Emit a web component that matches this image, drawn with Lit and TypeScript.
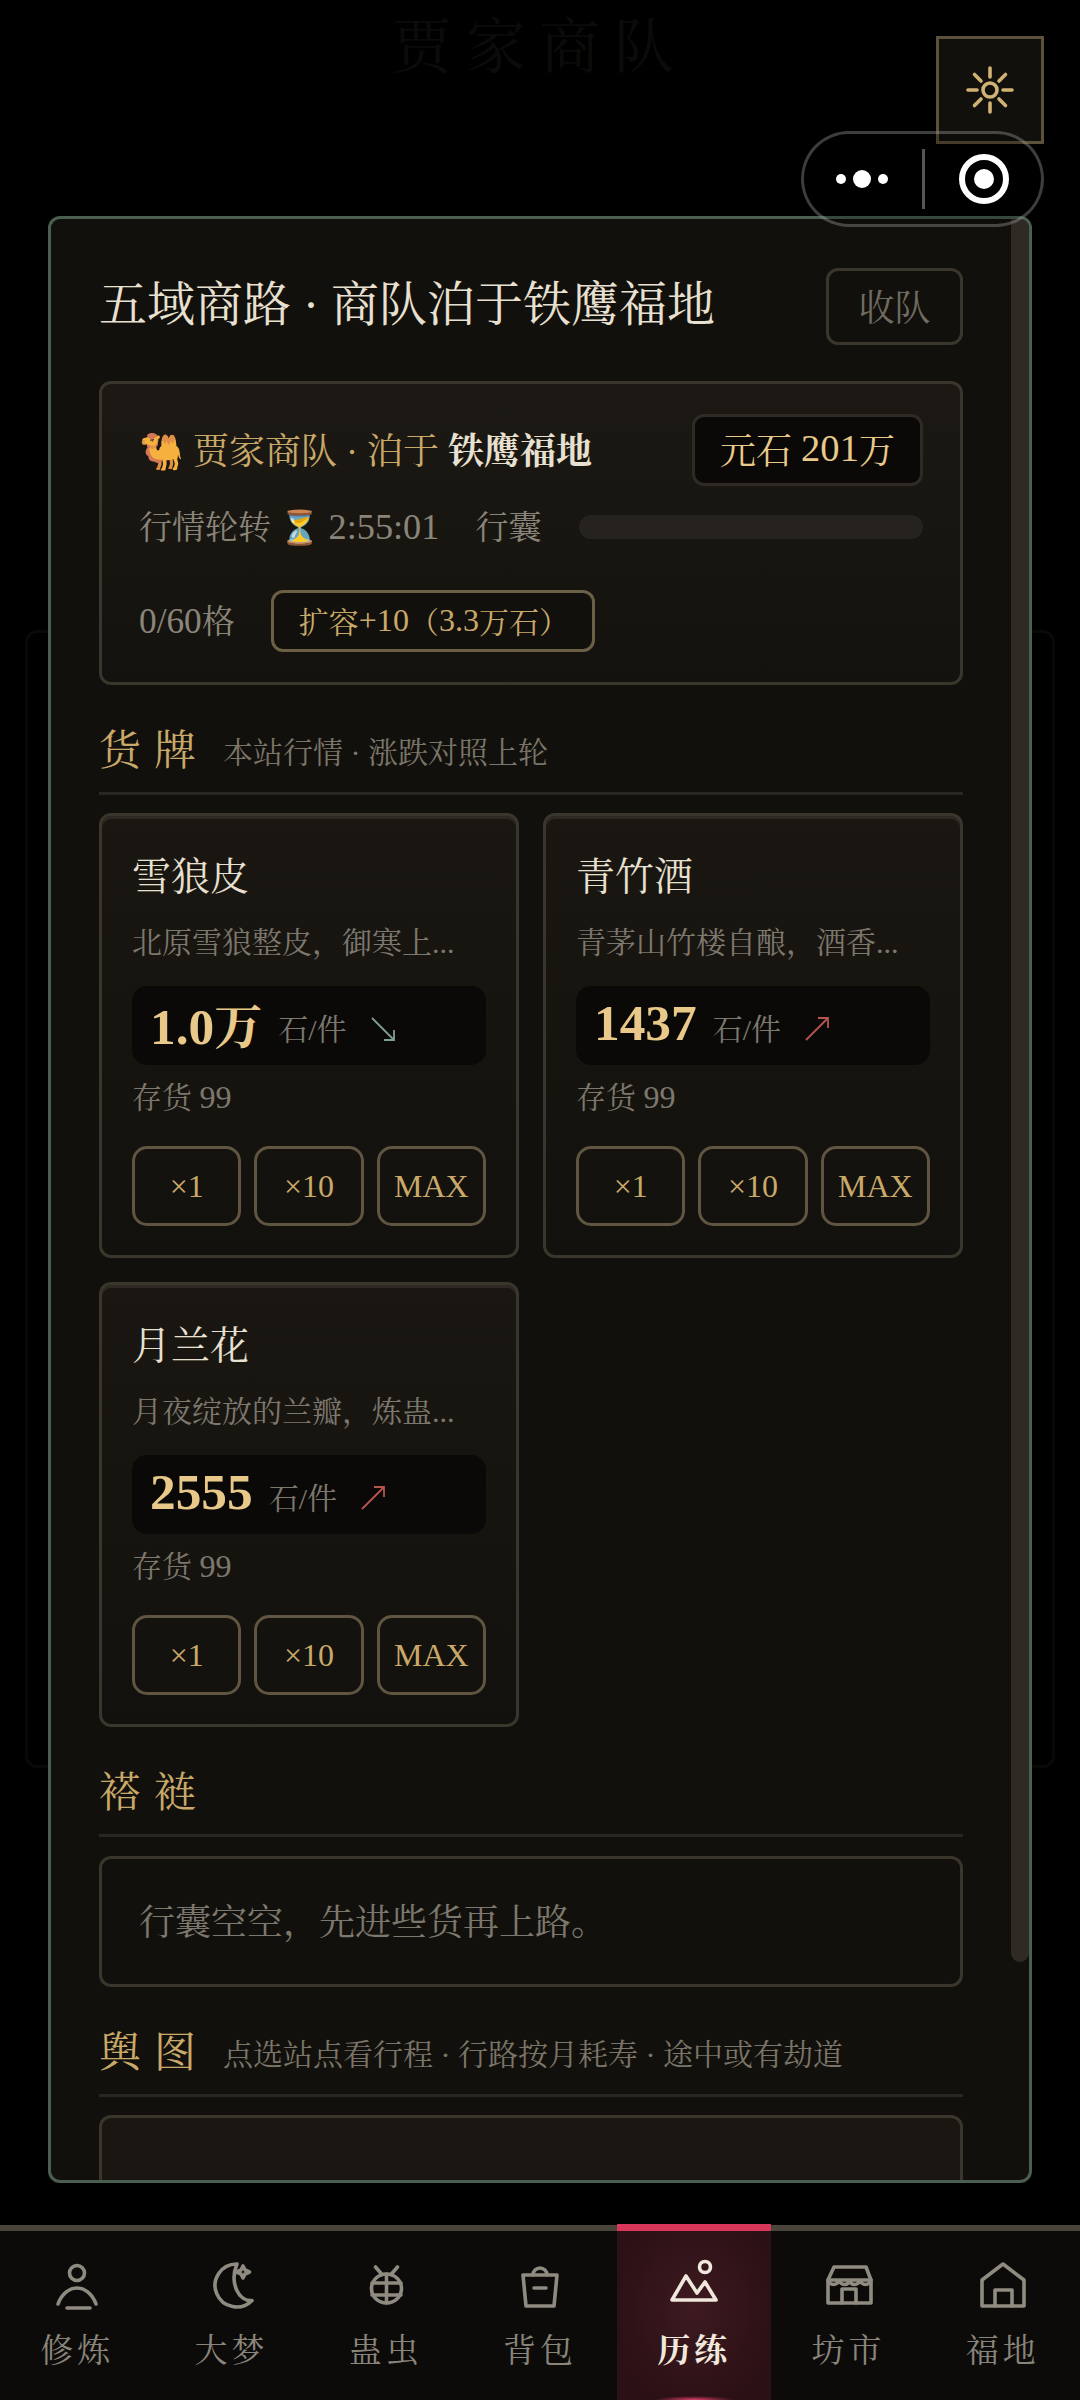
import { LitElement, html, css, svg } from "lit";
import { customElement } from "lit/decorators.js";

type Good = { name: string; desc: string; price: string; unit?: string; dir: "up" | "down" };
const goods: Good[] = [
  { name: "雪狼皮", desc: "北原雪狼整皮，御寒上...", price: "1.0", unit: "万", dir: "down" },
  { name: "青竹酒", desc: "青茅山竹楼自酿，酒香...", price: "1437", dir: "up" },
  { name: "月兰花", desc: "月夜绽放的兰瓣，炼蛊...", price: "2555", dir: "up" },
];

const icons: Record<string, unknown> = {
  person: svg`<circle cx="30" cy="16" r="7.5"/><path d="M11 47C15 36 23 31 30 31S45 36 49 47"/><path d="M20 51H43"/>`,
  moon: svg`<path d="M36 7A21.5 21.5 0 1 0 51 43.5C38 45 28 26 36 7Z"/><path d="M42 9L44 13L48.5 15L44 17L42 21L40 17L35.5 15L40 13Z"/>`,
  bug: svg`<ellipse cx="30.5" cy="31.5" rx="15" ry="14.5"/><path d="M19.5 10L26 17.5M41.5 10L35 17.5M30.5 17V46M16 26H45M16 38H45"/>`,
  bag: svg`<path d="M13 18H47L44 49H16Z"/><path d="M23 18A7 7 0 0 1 37 18"/><path d="M24 31H36"/>`,
  mountain: svg`<path d="M8 43L22 19L33 36L41 25L52 43Z"/><circle cx="41" cy="10" r="5.5"/>`,
  shop: svg`<path d="M15 10H47L52 23V46H9V23Z"/><path d="M9 23H52M9 23C11 29 18 29 20 23C22 29 29 29 30.5 23C32 29 39 29 41 23C43 29 50 29 52 23"/><path d="M23 46V32H37V46"/>`,
  house: svg`<path d="M9 49V23L30 7L51 23V49Z"/><path d="M22 49V33H39V49"/>`,
};

const tabs = [
  { label: "修炼", icon: "person" },
  { label: "大梦", icon: "moon" },
  { label: "蛊虫", icon: "bug" },
  { label: "背包", icon: "bag" },
  { label: "历练", icon: "mountain", active: true },
  { label: "坊市", icon: "shop" },
  { label: "福地", icon: "house" },
];

@customElement("app-root")
export class AppRoot extends LitElement {
  static styles = css`
    :host {
      display: flex;
      flex-direction: column;
      width: 1080px;
      height: 2400px;
      background: #000;
      font-family: "Liberation Serif", "Noto Serif CJK SC", serif;
      color: #e8e0d0;
      overflow: hidden;
    }
    * { box-sizing: border-box; }
    .n { font-size: 1.07em; line-height: 1; }
    .n.clock { font-size: 1.1em; }
    .stage { position: relative; flex: 1; }
    .ghost-title {
      text-align: center;
      padding-top: 12px;
      font-size: 60px;
      letter-spacing: 14px;
      color: #0b0b0a;
      line-height: 72px;
    }
    .ghost-panel {
      position: absolute;
      left: 25px;
      top: 630px;
      width: 1030px;
      height: 1138px;
      border: 3px solid #090908;
      border-radius: 12px;
    }
    .settings {
      position: absolute;
      left: 936px;
      top: 36px;
      width: 108px;
      height: 108px;
      background: #12100c;
      border: 3px solid #5c5139;
      display: flex;
      align-items: center;
      justify-content: center;
    }
    .settings svg { width: 60px; height: 60px; fill: none; stroke: #d0b274; stroke-width: 3.6; stroke-linecap: round; }
    .capsule {
      position: absolute;
      z-index: 3;
      left: 801px;
      top: 131px;
      width: 243px;
      height: 96px;
      border: 3px solid rgba(255, 255, 255, 0.24);
      border-radius: 48px;
      background: rgba(0, 0, 0, 0.25);
    }
    .capsule svg { display: block; width: 237px; height: 90px; }
    .modal {
      position: absolute;
      z-index: 2;
      left: 48px;
      top: 216px;
      width: 984px;
      height: 1967px;
      background: #12100c;
      border: 3px solid #4a5f50;
      border-radius: 12px;
      overflow: hidden;
      padding: 49px 66px 0 48px;
    }
    .thumb {
      position: absolute;
      right: 0;
      top: 0;
      width: 18px;
      height: 1743px;
      background: #2f2b24;
      border-radius: 0 0 9px 9px;
    }
    .title-row { display: flex; justify-content: space-between; align-items: center; height: 77px; }
    .title { font-size: 48px; line-height: 73px; color: #e8e0d0; padding-bottom: 4px; }
    .close {
      width: 137px;
      height: 77px;
      border: 3px solid #3a362c;
      border-radius: 12px;
      padding-bottom: 3px;
      display: flex;
      align-items: center;
      justify-content: center;
      font-size: 36px;
      color: #6f6b60;
    }
    .info {
      margin-top: 36px;
      height: 304px;
      padding: 30px 37px 0;
      border: 3px solid #3a362c;
      border-radius: 12px;
      background: linear-gradient(#1c1914, #14120e);
    }
    .info-top { display: flex; justify-content: space-between; align-items: center; }
    .caravan { font-size: 36px; color: #c9a96a; padding-bottom: 4px; }
    .caravan b { color: #e8e0d0; }
    .stone {
      width: 231px;
      height: 72px;
      border: 3px solid #2f2b24;
      border-radius: 12px;
      background: #0a0908;
      padding-bottom: 3px;
      display: flex;
      align-items: center;
      justify-content: center;
      font-size: 36px;
      white-space: pre;
      color: #e8c98a;
    }
    .info-mid {
      margin-top: 14px;
      height: 54px;
      padding-bottom: 6px;
      display: flex;
      align-items: center;
      font-size: 33px;
      color: #8a857a;
    }
    .timer { margin-right: 36px; }
    .bar { flex: 1; height: 24px; margin-top: 6px; margin-left: 38px; background: #26231e; border-radius: 12px; }
    .info-low { margin-top: 36px; display: flex; align-items: center; gap: 36px; font-size: 33px; color: #8a857a; }
    .slots { padding-bottom: 5px; }
    .expand {
      width: 324px;
      height: 62px;
      border: 3px solid #6b5f45;
      border-radius: 12px;
      background: #12100c;
      padding: 0 0 2px 25px;
      display: flex;
      align-items: center;
      white-space: pre;
      font-size: 30px;
      color: #c9a96a;
    }
    .head {
      margin-top: 24px;
      display: flex;
      align-items: center;
      height: 86px;
      padding-bottom: 11px;
      border-bottom: 3px solid #2a2722;
    }
    .head h3 {
      margin: 0;
      font-weight: 400;
      font-size: 42px;
      letter-spacing: 13px;
      color: #c9a96a;
      margin-right: 14px;
      padding-top: 4px;
    }
    .head span { font-size: 30px; color: #7a7568; padding-top: 10px; }
    .grid { margin-top: 18px; display: grid; grid-template-columns: 420px 420px; gap: 24px; }
    .card {
      height: 445px;
      padding: 30px 30px 0;
      border: 3px solid #3a362c;
      border-radius: 12px;
      background: linear-gradient(#1a1712, #13110d);
      box-shadow: inset 0 3px 0 #2e2a23;
    }
    .name { font-size: 39px; line-height: 62px; color: #e8e0d0; }
    .desc { margin-top: 11px; font-size: 30px; line-height: 48px; color: #7d786e; white-space: nowrap; overflow: hidden; }
    .price {
      margin-top: 19px;
      height: 79px;
      border-radius: 15px;
      background: #0a0908;
      padding: 2px 0 0 18px;
      display: flex;
      align-items: center;
      font-size: 30px;
      color: #7d786e;
    }
    .price b { font-size: 48px; color: #e8c98a; margin-right: 16px; white-space: pre; padding-bottom: 6px; }
    .arrow { margin-left: 24px; margin-top: 4px; width: 24px; height: 24px; fill: none; stroke-width: 1.8; }
    .arrow.up { stroke: #b85450; }
    .arrow.down { stroke: #7f9e92; }
    .stock { margin-top: 9px; font-size: 30px; line-height: 48px; color: #7d786e; }
    .btns { margin-top: 24px; display: grid; grid-template-columns: repeat(3, 1fr); gap: 13px; }
    .btns div {
      height: 80px;
      border: 3px solid #5f5540;
      border-radius: 15px;
      display: flex;
      align-items: center;
      justify-content: center;
      font-size: 32px;
      color: #c9a96a;
    }
    .empty {
      margin-top: 19px;
      height: 131px;
      border: 3px solid #3a362c;
      border-radius: 12px;
      padding: 0 0 5px 37px;
      display: flex;
      align-items: center;
      font-size: 36px;
      color: #7d786e;
    }
    .map {
      margin-top: 18px;
      height: 300px;
      border: 3px solid #3a362c;
      border-radius: 12px;
      background: #1a1712;
    }
    nav {
      position: relative;
      z-index: 1;
      height: 175px;
      display: grid;
      grid-template-columns: repeat(7, 1fr);
      background: #0c0b0a;
      border-top: 6px solid #4a453b;
    }
    .tab {
      display: flex;
      flex-direction: column;
      align-items: center;
      padding-top: 26px;
      color: #8a857a;
      font-size: 33px;
      letter-spacing: 4px;
      position: relative;
    }
    .tab svg { width: 60px; height: 60px; fill: none; stroke: #8f8b80; stroke-width: 3.6; stroke-linejoin: round; stroke-linecap: round; }
    .tab .lab { margin-top: 9px; line-height: 50px; }
    .tab.active {
      margin-top: -7px;
      padding-top: 33px;
      border-top: 7px solid #d9365c;
      background: #2f1218;
      background-image: radial-gradient(ellipse at 50% 45%, #3d1a20, #2b1015 75%);
      color: #f0e8dc;
      font-weight: 700;
    }
    .tab.active svg { stroke: #f0e8dc; margin-top: -7px; }
    .tab.active::after {
      content: "";
      position: absolute;
      left: 37px;
      right: 37px;
      bottom: 0;
      height: 4px;
      background: radial-gradient(ellipse at 50% 100%, #e0406a, transparent 70%);
    }
  `;

  renderCard(g: Good) {
    const d = g.dir === "up" ? "M1 23L23 1M13 1H23V11" : "M1 1L23 23M23 13V23H13";
    return html`<div class="card">
      <div class="name">${g.name}</div>
      <div class="desc">${g.desc}</div>
      <div class="price">
        <b><span class="n">${g.price}</span>${g.unit ?? ""}</b>石/件<svg class="arrow ${g.dir}" viewBox="0 0 24 24"><path d=${d}/></svg>
      </div>
      <div class="stock">存货 <span class="n">99</span></div>
      <div class="btns"><div>×1</div><div>×10</div><div>MAX</div></div>
    </div>`;
  }

  render() {
    return html`
      <div class="stage">
        <div class="ghost-title">贾家商队</div>
        <div class="ghost-panel"></div>
        <div class="settings">
          <svg viewBox="0 0 60 60">
            <circle cx="30" cy="30" r="7"/>
            <path d="M30 8V17M30 43V52M8 30H17M43 30H52M14.5 14.5L21 21M39 39L45.5 45.5M14.5 45.5L21 39M39 21L45.5 14.5"/>
          </svg>
        </div>
        <div class="capsule">
          <svg viewBox="0 0 237 90">
            <circle cx="37" cy="45" r="5" fill="#fff"/>
            <circle cx="58" cy="45" r="9" fill="#fff"/>
            <circle cx="79" cy="45" r="5" fill="#fff"/>
            <rect x="118" y="15" width="3" height="60" fill="#555"/>
            <circle cx="180" cy="45" r="22" fill="none" stroke="#fff" stroke-width="6"/>
            <circle cx="180" cy="45" r="10" fill="#fff"/>
          </svg>
        </div>
        <div class="modal">
          <div class="title-row">
            <div class="title">五域商路 · 商队泊于铁鹰福地</div>
            <div class="close">收队</div>
          </div>
          <div class="info">
            <div class="info-top">
              <div class="caravan">🐫 贾家商队 · 泊于 <b>铁鹰福地</b></div>
              <div class="stone">元石 <span class="n">201</span>万</div>
            </div>
            <div class="info-mid">
              <span class="timer">行情轮转 ⏳ <span class="n clock">2:55:01</span></span><span>行囊</span><div class="bar"></div>
            </div>
            <div class="info-low">
              <span class="slots"><span class="n">0/60</span>格</span>
              <div class="expand">扩容<span class="n">+10</span>（<span class="n">3.3</span>万石）</div>
            </div>
          </div>
          <div class="head"><h3>货牌</h3><span>本站行情 · 涨跌对照上轮</span></div>
          <div class="grid">${goods.map((g) => this.renderCard(g))}</div>
          <div class="head"><h3>褡裢</h3></div>
          <div class="empty">行囊空空，先进些货再上路。</div>
          <div class="head"><h3>舆图</h3><span>点选站点看行程 · 行路按月耗寿 · 途中或有劫道</span></div>
          <div class="map"></div>
          <div class="thumb"></div>
        </div>
      </div>
      <nav>
        ${tabs.map(
          (t) => html`<div class="tab ${t.active ? "active" : ""}">
            <svg viewBox="0 0 60 60">${icons[t.icon]}</svg>
            <div class="lab">${t.label}</div>
          </div>`
        )}
      </nav>
    `;
  }
}
